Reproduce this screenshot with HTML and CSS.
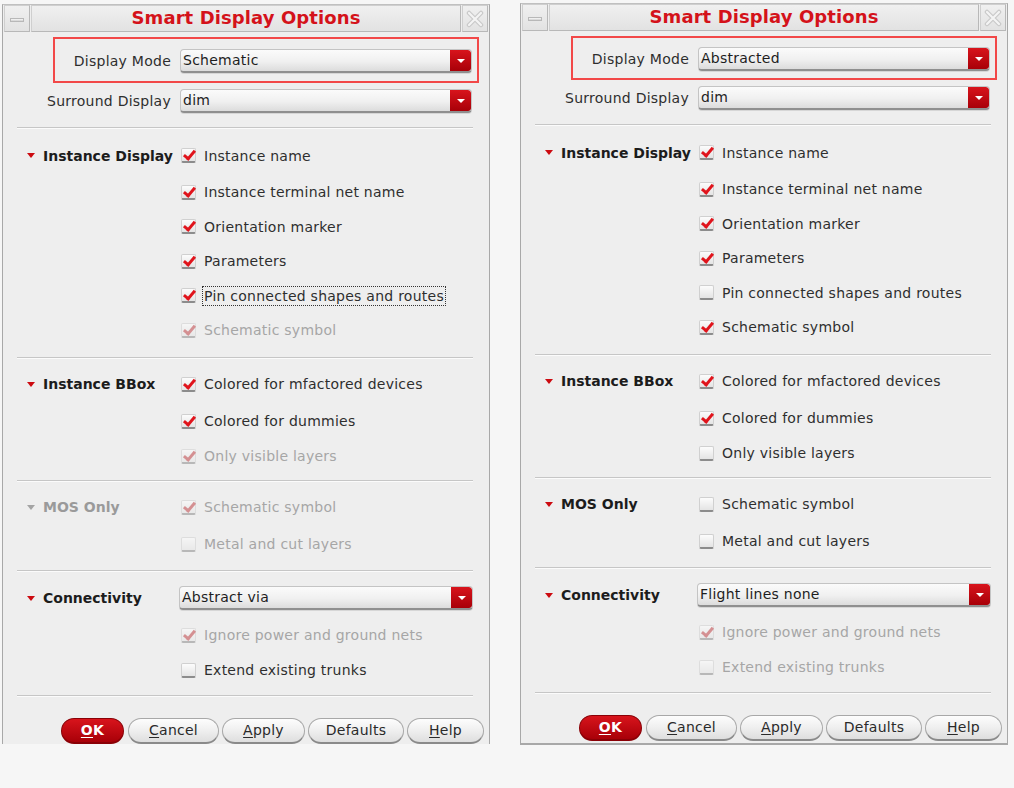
FILE: index.html
```html
<!DOCTYPE html>
<html>
<head>
<meta charset="utf-8">
<link rel="stylesheet" href="styles.css">
</head>
<body>
<div class="page">

<div class="dialog dlg-left">
  <div class="titlebar">
    <div class="tb-btn tb-min"><span class="min-bar"></span></div>
    <div class="tb-title">Smart Display Options</div>
    <div class="tb-btn tb-close"><svg width="18" height="18" viewBox="0 0 18 18"><path d="M3 3 L15 15 M15 3 L3 15" stroke="#c9c9c9" stroke-width="4.5" stroke-linecap="round"/><path d="M3 3 L15 15 M15 3 L3 15" stroke="#f4f4f4" stroke-width="2.2" stroke-linecap="round"/></svg></div>
  </div>
  <div class="body">
    <div class="hl">
      <div class="frow hl-row">
        <span class="lbl">Display Mode</span>
        <div class="combo"><span class="combo-text">Schematic</span><span class="combo-arrow"></span></div>
      </div>
    </div>
    <div class="frow">
      <span class="lbl">Surround Display</span>
      <div class="combo"><span class="combo-text">dim</span><span class="combo-arrow"></span></div>
    </div>
    <div class="sep sep-top"></div>

    <div class="section sec-inst">
      <div class="head"><span class="tri"></span>Instance Display</div>
      <div class="items">
        <div class="item first"><span class="cb on"></span>Instance name</div>
        <div class="item"><span class="cb on"></span>Instance terminal net name</div>
        <div class="item"><span class="cb on"></span>Orientation marker</div>
        <div class="item"><span class="cb on"></span>Parameters</div>
        <div class="item"><span class="cb on"></span><span class="focus">Pin connected shapes and routes</span></div>
        <div class="item dis"><span class="cb on"></span>Schematic symbol</div>
      </div>
    </div>
    <div class="sep"></div>

    <div class="section sec-bbox">
      <div class="head"><span class="tri"></span>Instance BBox</div>
      <div class="items">
        <div class="item first"><span class="cb on"></span>Colored for mfactored devices</div>
        <div class="item"><span class="cb on"></span>Colored for dummies</div>
        <div class="item dis"><span class="cb on"></span>Only visible layers</div>
      </div>
    </div>
    <div class="sep"></div>

    <div class="section sec-mos">
      <div class="head dis"><span class="tri"></span>MOS Only</div>
      <div class="items">
        <div class="item first dis"><span class="cb on"></span>Schematic symbol</div>
        <div class="item dis"><span class="cb"></span>Metal and cut layers</div>
      </div>
    </div>
    <div class="sep"></div>

    <div class="section sec-conn">
      <div class="head"><span class="tri"></span>Connectivity</div>
      <div class="items">
        <div class="item first combo-item"><div class="combo"><span class="combo-text">Abstract via</span><span class="combo-arrow"></span></div></div>
        <div class="item dis"><span class="cb on"></span>Ignore power and ground nets</div>
        <div class="item"><span class="cb"></span>Extend existing trunks</div>
      </div>
    </div>
    <div class="sep"></div>

    <div class="buttons">
      <button class="btn ok"><u>O</u>K</button>
      <button class="btn w-cancel"><u>C</u>ancel</button>
      <button class="btn w-apply"><u>A</u>pply</button>
      <button class="btn w-def">Defaults</button>
      <button class="btn w-help"><u>H</u>elp</button>
    </div>
  </div>
</div>

<div class="dialog dlg-right">
  <div class="titlebar">
    <div class="tb-btn tb-min"><span class="min-bar"></span></div>
    <div class="tb-title">Smart Display Options</div>
    <div class="tb-btn tb-close"><svg width="18" height="18" viewBox="0 0 18 18"><path d="M3 3 L15 15 M15 3 L3 15" stroke="#c9c9c9" stroke-width="4.5" stroke-linecap="round"/><path d="M3 3 L15 15 M15 3 L3 15" stroke="#f4f4f4" stroke-width="2.2" stroke-linecap="round"/></svg></div>
  </div>
  <div class="body">
    <div class="hl hl-short">
      <div class="frow hl-row">
        <span class="lbl">Display Mode</span>
        <div class="combo"><span class="combo-text">Abstracted</span><span class="combo-arrow"></span></div>
      </div>
    </div>
    <div class="frow">
      <span class="lbl">Surround Display</span>
      <div class="combo"><span class="combo-text">dim</span><span class="combo-arrow"></span></div>
    </div>
    <div class="sep sep-top"></div>

    <div class="section sec-inst">
      <div class="head"><span class="tri"></span>Instance Display</div>
      <div class="items">
        <div class="item first"><span class="cb on"></span>Instance name</div>
        <div class="item"><span class="cb on"></span>Instance terminal net name</div>
        <div class="item"><span class="cb on"></span>Orientation marker</div>
        <div class="item"><span class="cb on"></span>Parameters</div>
        <div class="item"><span class="cb"></span>Pin connected shapes and routes</div>
        <div class="item"><span class="cb on"></span>Schematic symbol</div>
      </div>
    </div>
    <div class="sep"></div>

    <div class="section sec-bbox">
      <div class="head"><span class="tri"></span>Instance BBox</div>
      <div class="items">
        <div class="item first"><span class="cb on"></span>Colored for mfactored devices</div>
        <div class="item"><span class="cb on"></span>Colored for dummies</div>
        <div class="item"><span class="cb"></span>Only visible layers</div>
      </div>
    </div>
    <div class="sep"></div>

    <div class="section sec-mos">
      <div class="head"><span class="tri"></span>MOS Only</div>
      <div class="items">
        <div class="item first"><span class="cb"></span>Schematic symbol</div>
        <div class="item"><span class="cb"></span>Metal and cut layers</div>
      </div>
    </div>
    <div class="sep"></div>

    <div class="section sec-conn">
      <div class="head"><span class="tri"></span>Connectivity</div>
      <div class="items">
        <div class="item first combo-item"><div class="combo"><span class="combo-text">Flight lines none</span><span class="combo-arrow"></span></div></div>
        <div class="item dis"><span class="cb on"></span>Ignore power and ground nets</div>
        <div class="item dis"><span class="cb"></span>Extend existing trunks</div>
      </div>
    </div>
    <div class="sep"></div>

    <div class="buttons">
      <button class="btn ok"><u>O</u>K</button>
      <button class="btn w-cancel"><u>C</u>ancel</button>
      <button class="btn w-apply"><u>A</u>pply</button>
      <button class="btn w-def">Defaults</button>
      <button class="btn w-help"><u>H</u>elp</button>
    </div>
  </div>
</div>

</div>
</body>
</html>
```
FILE: styles.css
```css
* { box-sizing: border-box; }
html, body { margin: 0; padding: 0; }
body {
  background: #f6f6f6;
  font-family: "DejaVu Sans", "Liberation Sans", sans-serif;
  font-size: 14px;
  letter-spacing: 0.25px;
  color: #2a2a2a;
  width: 1014px;
  height: 788px;
  overflow: hidden;
}
.page {
  display: flex;
  align-items: flex-start;
  gap: 30px;
  padding: 3px 0 0 2px;
}
.dialog {
  width: 488px;
  background: #eeeeee;
  border-left: 1px solid #a8a8a8;
  border-right: 1px solid #a8a8a8;
  border-top: 1px solid #c0c0c0;
}
.dlg-left { margin-top: 1px; height: 740px; }
.dlg-right { height: 742px; border-bottom: 2px solid #a8a8a8; }

/* title bar */
.titlebar {
  display: flex;
  height: 27px;
  padding: 0 1px;
  gap: 1px;
}
.tb-btn, .tb-title {
  background: linear-gradient(#f0f0f0, #e2e2e2);
  border: 1px solid #cfcfcf;
  border-right-color: #b8b8b8;
  border-bottom-color: #b8b8b8;
}
.tb-btn {
  width: 26px;
  display: flex;
  align-items: center;
  justify-content: center;
}
.tb-title {
  flex: 1;
  text-align: center;
  font-weight: bold;
  font-size: 18px;
  letter-spacing: 0.1px;
  color: #d4121a;
  line-height: 23px;
}
.min-bar {
  display: block;
  width: 14px;
  height: 4px;
  background: linear-gradient(#fafafa, #cfcfcf);
  border: 1px solid #b8b8b8;
  margin-top: 2px;
}

/* form rows */
.frow {
  display: grid;
  grid-template-columns: 168px 292px;
  column-gap: 9px;
  align-items: center;
  height: 24px;
  margin-top: 6px;
}
.lbl { text-align: right; color: #2e2e2e; white-space: nowrap; }
.hl {
  margin: 5px 10px 0 50px;
  border: 2px solid #f24848;
  padding: 10px 4px 8px 0;
  height: 46px;
}
.hl-short { height: 44px; padding-top: 9px; }
.hl-row { grid-template-columns: 116px 292px; margin-top: 0; }

.combo {
  display: flex;
  height: 24px;
  border-radius: 4px;
  background: linear-gradient(#fbfbfb 0%, #f0f0f0 55%, #dcdcdc 100%);
  border: 1px solid #c4c4c4;
  border-bottom: 2px solid #8f8f8f;
  box-shadow: 0 1px 0 #d6d6d6;
  overflow: hidden;
}
.combo-text {
  flex: 1;
  padding-left: 2px;
  line-height: 21px;
  color: #1e1e1e;
  white-space: nowrap;
}
.combo-arrow {
  width: 21px;
  background: linear-gradient(#d8141c, #a80008);
  position: relative;
  border-radius: 0 3px 3px 0;
}
.combo-arrow::after {
  content: "";
  position: absolute;
  left: 7px;
  top: 9px;
  border-left: 4px solid transparent;
  border-right: 4px solid transparent;
  border-top: 4px solid #ffffff;
}

.sep {
  height: 2px;
  margin: 0 16px 0 14px;
  border-top: 1px solid #c6c6c6;
  border-bottom: 1px solid #fbfbfb;
}
.sep-top { margin-top: 14px; }

/* sections */
.section {
  display: grid;
  grid-template-columns: 177px 1fr;
  align-items: start;
}
.sec-inst { padding: 9px 0 9px; }
.sec-bbox { padding: 8px 0 6px; }
.sec-mos { padding: 8px 0 8px; }
.sec-conn { padding: 9px 0 7px; }
.head {
  padding-left: 24px;
  height: 35px;
  display: flex;
  align-items: center;
  font-weight: bold;
  font-size: 14px;
  letter-spacing: 0;
  color: #1c1c1c;
  white-space: nowrap;
}
.head.dis { color: #9a9a9a; }
.tri {
  width: 0; height: 0;
  border-left: 4px solid transparent;
  border-right: 4px solid transparent;
  border-top: 5px solid #cc0a10;
  margin-right: 8px;
}
.head.dis .tri { border-top-color: #a4a4a4; }

.item {
  display: flex;
  align-items: center;
  height: 35px;
  color: #2e2e2e;
  white-space: nowrap;
}
.sec-inst .item { height: 34.5px; }
.section .item.first { height: 35px; margin-bottom: 2px; }
.item.dis { color: #a6a6a6; }
.combo-item { padding-right: 16px; margin-left: -1px; }
.combo-item .combo { flex: 1; }

.cb {
  width: 15px;
  height: 15px;
  margin: 0 8px 0 1px;
  background: linear-gradient(#fcfcfc, #e4e4e4);
  border: 1px solid #d0d0d0;
  border-bottom: 2px solid #8c8c8c;
  border-radius: 2px;
  position: relative;
  flex: none;
}
.cb.on::after {
  content: "";
  position: absolute;
  left: 4px;
  top: -1px;
  width: 4px;
  height: 9px;
  border-right: 3px solid #e0141c;
  border-bottom: 3px solid #e0141c;
  transform: rotate(40deg);
}
.item.dis .cb { opacity: 0.55; }
.item.dis .cb.on::after { border-color: #c04448; }

.focus {
  outline: 1px dotted #333;
  outline-offset: 1px;
}

/* buttons */
.buttons {
  display: flex;
  gap: 3px;
  padding: 21px 0 0 58px;
}
.btn {
  font-family: "DejaVu Sans", "Liberation Sans", sans-serif;
  font-size: 14px;
  letter-spacing: 0.25px;
  height: 26px;
  border-radius: 13px;
  border: 1px solid #a8a8a8;
  border-bottom: 2px solid #8a8a8a;
  background: linear-gradient(#fdfdfd 0%, #efefef 50%, #dedede 100%);
  color: #2a2a2a;
  padding: 0;
}
.btn u { text-decoration-thickness: 1px; text-underline-offset: 2px; }
.ok {
  width: 63px;
  margin-right: 1px;
  background: linear-gradient(#d8141c, #a80008);
  border-color: #8a0006;
  color: #ffffff;
  font-weight: bold;
}
.w-cancel { width: 91px; }
.w-apply { width: 83px; }
.w-def { width: 96px; }
.w-help { width: 77px; }
```
